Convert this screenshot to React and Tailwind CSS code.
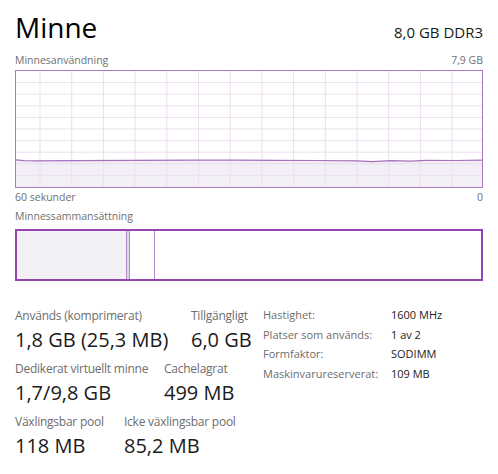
import React from 'react'

const vLines = Array.from({ length: 14 }, (_, i) => 24 + i * 31.7)
const hLines = Array.from({ length: 9 }, (_, i) => (i + 1) * 11.6)

const usage = [
  [0, 88.8], [8, 89.6], [20, 89.8], [60, 89.6], [120, 89.4], [180, 89.2],
  [220, 89.1], [260, 89.3], [300, 89.5], [340, 89.8], [357, 90.6], [375, 89.6],
  [395, 90.2], [410, 89.4], [440, 89.5], [466, 89.2],
]

function UsageChart() {
  const line = usage.map(([x, y]) => `${x},${y}`).join(' ')
  const area = `0,116 ${line} 466,116`
  return (
    <div className="mt-[3px] h-[118px] border border-[#ad76c5]">
      <svg width="466" height="116" viewBox="0 0 466 116" className="block">
        <polygon points={area} fill="#f2eff6" />
        {vLines.map((x) => (
          <line key={'v' + x} x1={x} y1="0" x2={x} y2="116" stroke="#ecdfee" strokeWidth="1" />
        ))}
        {hLines.map((y) => (
          <line key={'h' + y} x1="0" y1={y} x2="466" y2={y} stroke="#ecdfee" strokeWidth="1" />
        ))}
        <polyline points={line} fill="none" stroke="#a670bf" strokeWidth="1.2" />
      </svg>
    </div>
  )
}

function Stat({ label, value, width }) {
  return (
    <div className={width}>
      <div className="text-[12px] leading-[17px] tracking-[-0.02em] text-[#6d6d6d] whitespace-nowrap">{label}</div>
      <div className="mt-[2px] text-[20px] leading-[27px] text-[#1b1b1b] whitespace-nowrap">{value}</div>
    </div>
  )
}

const details = [
  ['Hastighet:', '1600 MHz'],
  ['Platser som används:', '1 av 2'],
  ['Formfaktor:', 'SODIMM'],
  ['Maskinvarureserverat:', '109 MB'],
]

export default function App() {
  return (
    <div className="h-[474px] w-[498px] overflow-hidden bg-white px-[15px] font-['Open_Sans',sans-serif]">
      <div className="flex items-baseline justify-between pt-[9px]">
        <h1 className="text-[28px] leading-[36px] text-black">Minne</h1>
        <span className="text-[15px] text-[#1a1a1a]">8,0 GB DDR3</span>
      </div>

      <div className="mt-[8px] flex justify-between text-[10.5px] leading-[14px] text-[#707070]">
        <span>Minnesanvändning</span>
        <span>7,9 GB</span>
      </div>
      <UsageChart />
      <div className="mt-[2px] flex justify-between text-[10.5px] leading-[14px] text-[#707070]">
        <span>60 sekunder</span>
        <span>0</span>
      </div>

      <div className="mt-[5px] text-[10.5px] leading-[14px] text-[#707070]">Minnessammansättning</div>
      <div className="mt-[6px] flex h-[52px] border-2 border-[#9346b3]">
        <div className="w-[109px] bg-[#f3f0f6]" />
        <div className="w-[4px] border-x border-[#b68bca] bg-[#e3d4ea]" />
        <div className="w-[25px] border-r border-[#b68bca]" />
        <div className="flex-1" />
      </div>

      <div className="mt-[26px] flex">
        <div className="flex w-[248px] flex-col gap-[7px]">
          <div className="flex">
            <Stat width="w-[176px]" label="Används (komprimerat)" value="1,8 GB (25,3 MB)" />
            <Stat width="" label="Tillgängligt" value="6,0 GB" />
          </div>
          <div className="flex">
            <Stat width="w-[149px]" label="Dedikerat virtuellt minne" value="1,7/9,8 GB" />
            <Stat width="" label="Cachelagrat" value="499 MB" />
          </div>
          <div className="flex">
            <Stat width="w-[109px]" label="Växlingsbar pool" value="118 MB" />
            <Stat width="" label="Icke växlingsbar pool" value="85,2 MB" />
          </div>
        </div>
        <div className="-mt-[2px] text-[11px] leading-[19.5px]">
          {details.map(([k, v]) => (
            <div key={k} className="flex">
              <span className="w-[128px] whitespace-nowrap text-[#6d6d6d]">{k}</span>
              <span className="whitespace-nowrap text-[#1b1b1b]">{v}</span>
            </div>
          ))}
        </div>
      </div>
    </div>
  )
}
